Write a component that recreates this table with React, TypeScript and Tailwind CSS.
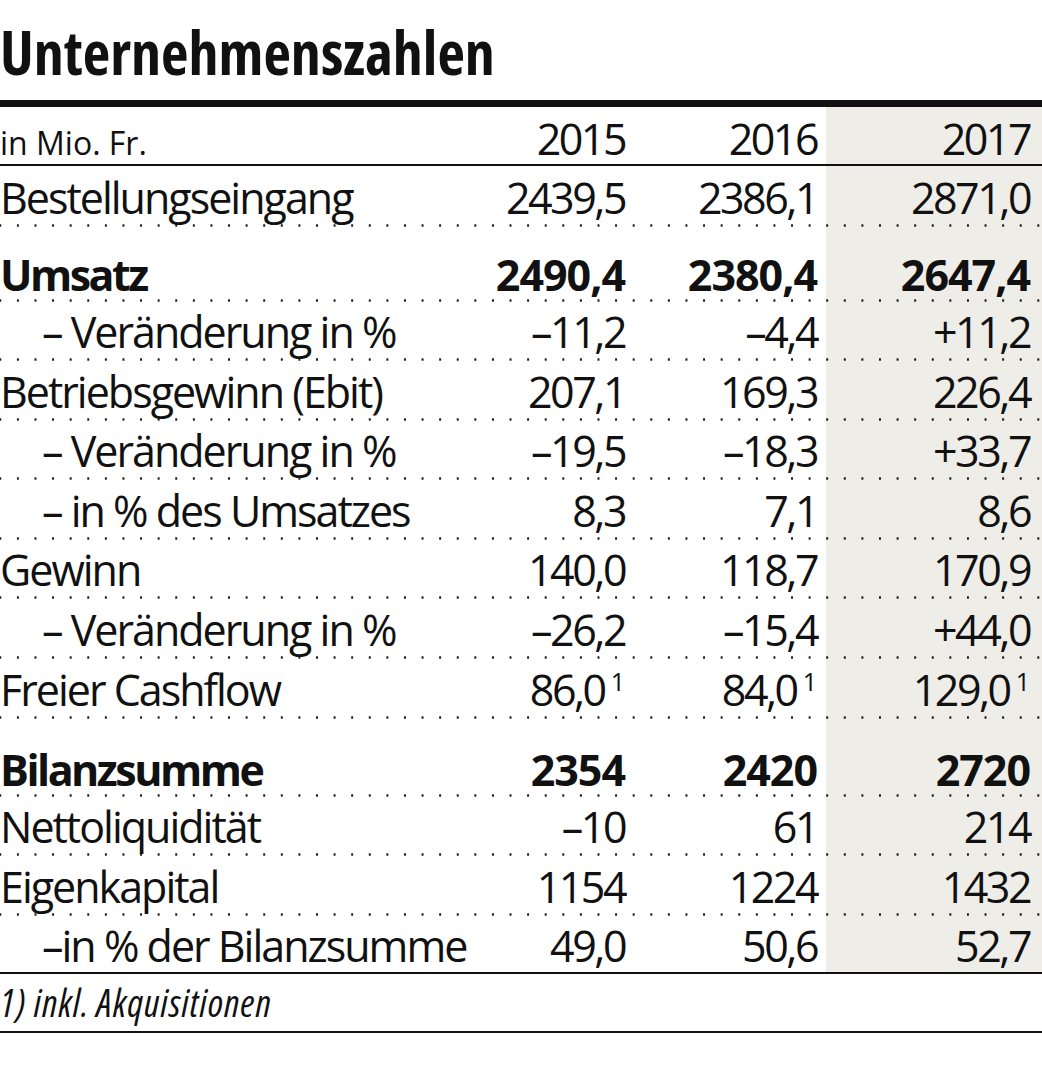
import React from "react";

type Row = {
  label: string;
  values: [string, string, string];
  bold?: boolean;
  indent?: boolean;
  note?: boolean;
  h?: string;
};

const rows: Row[] = [
  { label: "Bestellungseingang", values: ["2439,5", "2386,1", "2871,0"], h: "h-[60.5px]" },
  { label: "Umsatz", values: ["2490,4", "2380,4", "2647,4"], bold: true, h: "h-[75px]" },
  { label: "– Veränderung in %", values: ["–11,2", "–4,4", "+11,2"], indent: true },
  { label: "Betriebsgewinn (Ebit)", values: ["207,1", "169,3", "226,4"] },
  { label: "– Veränderung in %", values: ["–19,5", "–18,3", "+33,7"], indent: true },
  { label: "– in % des Umsatzes", values: ["8,3", "7,1", "8,6"], indent: true },
  { label: "Gewinn", values: ["140,0", "118,7", "170,9"] },
  { label: "– Veränderung in %", values: ["–26,2", "–15,4", "+44,0"], indent: true },
  { label: "Freier Cashflow", values: ["86,0", "84,0", "129,0"], note: true },
  { label: "Bilanzsumme", values: ["2354", "2420", "2720"], bold: true, h: "h-[78px]" },
  { label: "Nettoliquidität", values: ["–10", "61", "214"] },
  { label: "Eigenkapital", values: ["1154", "1224", "1432"] },
];

const lastRow: Row = { label: "–in % der Bilanzsumme", values: ["49,0", "50,6", "52,7"], indent: true };

const grid = "grid grid-cols-[minmax(0,1fr)_192px_192px_216px] items-end";
const dots =
  "bg-[image:radial-gradient(circle,#1a1a1a_1px,transparent_1.4px)] bg-[length:17.6px_3px] bg-[position:-8.5px_100%] bg-repeat-x";
const body = "text-[43px] leading-[43px]";

const Cells = ({ row }: { row: Row }) => {
  const label = row.bold ? "font-bold tracking-[-2.5px]" : "font-normal tracking-[-2px]";
  const num = row.bold ? "font-bold tracking-[-1px]" : "font-normal tracking-[-2.5px]";
  return (
    <>
      <div className={`whitespace-nowrap ${body} ${label} ${row.indent ? "pl-[42px]" : ""}`}>{row.label}</div>
      {row.values.map((v, i) => (
        <div key={i} className={`whitespace-nowrap text-right ${body} ${i === 2 ? "pr-[12px]" : "pr-[9px]"}`}>
          <span className={num}>{v}</span>
          {row.note && <span className="ml-[6px] align-[15px] text-[25px] leading-none">1</span>}
        </div>
      ))}
    </>
  );
};

export default function App() {
  return (
    <div className="w-[1042px] bg-white text-[#111] font-['Open_Sans',sans-serif]">
      <div className="h-[100px] pt-[22px]">
        <h1 className="text-[60px] leading-[60px] font-bold font-stretch-condensed">Unternehmenszahlen</h1>
      </div>
      <div className="h-[7px] bg-[#111]" />

      <div className="bg-[image:linear-gradient(to_right,transparent_826px,#efede8_826px)]">
        <div className={`${grid} h-[59px] border-b-2 border-[#111] pb-[4px]`}>
          <div className="pb-[1px] text-[32px] leading-[32px]">in Mio. Fr.</div>
          <div className={`pr-[9px] text-right ${body} tracking-[-2.5px]`}>2015</div>
          <div className={`pr-[9px] text-right ${body} tracking-[-2.5px]`}>2016</div>
          <div className={`pr-[12px] text-right ${body} tracking-[-2.5px]`}>2017</div>
        </div>

        {rows.map((row, idx) => (
          <div
            key={idx}
            className={`${grid} ${dots} ${row.h ?? "h-[59.6px]"} ${row.bold ? "pb-[6px]" : "pb-[8px]"}`}
          >
            <Cells row={row} />
          </div>
        ))}

        <div className={`${grid} h-[58px] border-b-2 border-[#111] pb-[5px]`}>
          <Cells row={lastRow} />
        </div>
      </div>

      <div className="flex h-[59px] items-end border-b-2 border-[#111] pb-[10px]">
        <p className="text-[38px] leading-[38px] italic font-stretch-condensed tracking-[1px]">1) inkl. Akquisitionen</p>
      </div>
    </div>
  );
}
